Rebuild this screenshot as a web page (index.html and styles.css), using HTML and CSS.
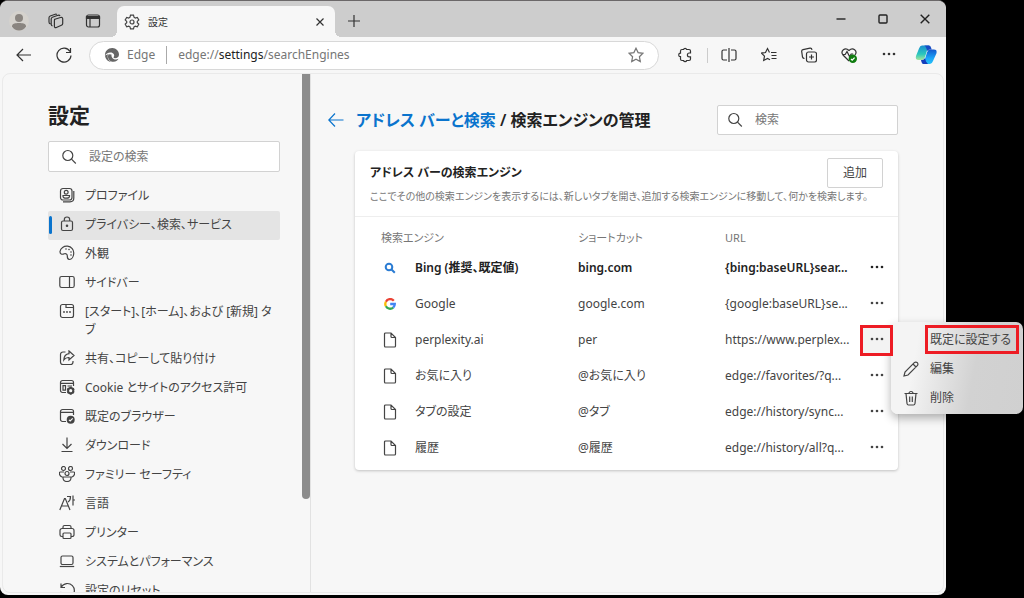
FILE: index.html
```html
<!DOCTYPE html>
<html lang="ja">
<head>
<meta charset="utf-8">
<title>設定</title>
<link rel="stylesheet" href="styles.css">
</head>
<body>
<svg class="sprite" aria-hidden="true">
  <symbol id="dots" viewBox="0 0 16 16"><g fill="currentColor" stroke="none"><circle cx="3" cy="7" r="1.300"/><circle cx="8" cy="7" r="1.300"/><circle cx="13" cy="7" r="1.300"/></g></symbol>
  <symbol id="page" viewBox="0 0 16 16"><path d="M3.500 1H9l4.500 4.500V14a1 1 0 0 1-1 1h-9a1 1 0 0 1-1-1V2a1 1 0 0 1 1-1zM9 1v3.500a1 1 0 0 0 1 1h3.500"/></symbol>
  <symbol id="search" viewBox="0 0 16 16"><circle cx="6.800" cy="6.500" r="5"/><path d="M10.500 10.200l4.300 4.300"/></symbol>
  <symbol id="gear" viewBox="0 0 16 16"><path d="M6.500 1.200h3l.5 2 1.300.8 2-.6 1.500 2.500-1.500 1.500v1.300l1.500 1.500-1.500 2.500-2-.6-1.300.8-.5 2h-3l-.5-2-1.300-.8-2 .6-1.500-2.500 1.500-1.500V7.400L1.200 5.900l1.500-2.500 2 .6L6 3.200z"/><circle cx="8" cy="8" r="2"/></symbol>
</svg>

<div class="window">
  <header class="tabbar">
    <button class="tool tab-tool" aria-label="プロファイル"><svg class="avatar" viewBox="0 0 20 20"><circle cx="10" cy="10" r="10" fill="#d5d2cd"/><circle cx="10" cy="7" r="4" fill="#8a8580"/><path d="M3 15.500c0-3 3-3.500 7-3.500s7 .5 7 3.500c-1.500 2.500-4 4-7 4s-5.500-1.500-7-4z" fill="#8a8580"/></svg></button>
    <button class="tool tab-tool" aria-label="ワークスペース"><svg class="icon" viewBox="0 0 16 16"><path d="M6 6.500L12.500 4.500q2-.5 2.200 1.300v4.700q0 1.300-1.300 1.800l-5 2.200q-2 .7-2-1.300V7.500q0-1 1-1.300"/><path d="M4.500 13q-1.300-.4-1.300-2V6q0-1.200 1.200-1.700l5.600-2q1.500-.4 2 .8M2.500 11Q1 10.700 1 9V4.700Q1 3.500 2.200 3l5-1.800q1-.3 1.700.2"/></svg></button>
    <button class="tool tab-tool" aria-label="タブ操作メニュー"><svg class="icon" viewBox="0 0 16 16"><rect x="1.500" y="2" width="13" height="12" rx="2"/><path d="M1.500 3.500h13v2h-13z" fill="currentColor"/><path d="M5 5v9"/></svg></button>
    <div class="tab">
      <svg class="icon" viewBox="0 0 16 16"><use href="#gear"/></svg>
      <span class="tab-title">設定</span>
      <button class="tool tab-close" aria-label="タブを閉じる"><svg class="icon-xs" viewBox="0 0 8 8"><path d="M.5.5l7 7M7.500.5l-7 7"/></svg></button>
    </div>
    <button class="tool tab-tool" aria-label="新しいタブ"><svg class="icon-s" viewBox="0 0 12 12"><path d="M6 0v12M0 6h12"/></svg></button>
    <div class="controls">
      <button class="tool control" aria-label="最小化"><svg class="icon-c" viewBox="0 0 10 10"><path d="M.5 5h9"/></svg></button>
      <button class="tool control" aria-label="最大化"><svg class="icon-c" viewBox="0 0 10 10"><rect x="1" y="1" width="8" height="8" rx="1"/></svg></button>
      <button class="tool control" aria-label="閉じる"><svg class="icon-c" viewBox="0 0 10 10"><path d="M.7.7l8.600 8.600M9.300.7L.7 9.300"/></svg></button>
    </div>
  </header>

  <div class="toolbar">
    <button class="tool" aria-label="戻る"><svg class="icon" viewBox="0 0 16 16"><path d="M15 8H1.500M7 2L1 8l6 6"/></svg></button>
    <button class="tool" aria-label="更新"><svg class="icon" viewBox="0 0 16 16"><path d="M14 4.500A7 7 0 1 0 15 8.500M14.500 1v4.500H10"/></svg></button>
    <div class="address">
      <svg class="icon edge" viewBox="0 0 16 16"><path d="M1 9C.5 4 4.500.8 8.500 1 12 1.200 15 4 15 7.500c0 2.500-1.700 3.800-4 3.800-1.500 0-1.700-.8-1.200-1.500C11 8 9.500 5.500 6.500 5.500 4 5.500 1.500 6.700 1 9z"/><path d="M4.500 7.200C2.800 11 5.500 14.800 9.500 14.800c2.500 0 4.500-1.500 5-3-3 1.700-7.500.2-7-4.300z"/><path d="M1 8.500C1.300 12 4 14.500 7 15c-2.500-1.700-4-4.500-3-7.800z"/></svg>
      <span class="brand">Edge</span>
      <span class="url">edge://<b>settings</b>/searchEngines</span>
      <button class="tool star" aria-label="お気に入りに追加"><svg class="icon" viewBox="0 0 16 16"><path d="M8 1.200l2.100 4.400 4.800.7-3.500 3.400.9 4.900L8 12.300l-4.300 2.300.9-4.900L1.100 6.300l4.800-.7z"/></svg></button>
    </div>
    <button class="tool" aria-label="拡張機能"><svg class="icon" viewBox="0 0 16 16"><path d="M5 2.500h1.500a1.700 1.700 0 0 1 3.200 0H12a1.500 1.500 0 0 1 1.500 1.500v2h-1.200a1.900 1.900 0 0 0 0 3.800h1.200v2.200a1.500 1.500 0 0 1-1.500 1.500H9.700a1.700 1.700 0 0 1-3.200 0H5A1.500 1.500 0 0 1 3.500 12V9.700a1.800 1.800 0 0 1 0-3.600V4A1.500 1.500 0 0 1 5 2.500z"/></svg></button>
    <span class="divider"></span>
    <button class="tool" aria-label="分割画面"><svg class="icon" viewBox="0 0 16 16"><path d="M8 1v14M6 3H2.500A1.500 1.500 0 0 0 1 4.500v7A1.500 1.500 0 0 0 2.500 13H6M10 3h3.500A1.500 1.500 0 0 1 15 4.500v7a1.500 1.500 0 0 1-1.500 1.500H10"/></svg></button>
    <button class="tool" aria-label="お気に入り"><svg class="icon" viewBox="0 0 16 16"><path d="M10 5.500h5.500M10.500 8.500h5M10.500 11.500h5M8.500 5.500L6.500 1.500l-2 4-4 .6 3 3-.8 4.400 3.800-2 2.500 1.300"/></svg></button>
    <button class="tool" aria-label="コレクション"><svg class="icon" viewBox="0 0 16 16"><rect x="5.500" y="5" width="10" height="10" rx="2"/><path d="M10.500 7.500v5M8 10h5M3.500 11.500q-1.500 0-2-1.500L.7 4.500Q.5 3 2 2.600L9 1.200q1.700-.2 2 1.600"/></svg></button>
    <button class="tool" aria-label="ブラウザー エッセンシャル"><svg class="icon" viewBox="0 0 16 16"><path d="M8 14L2 8C-1 4 4-.5 8 3.500 12-.5 17 4 14 8M1.500 7.500h2.700L6 4.500l2.500 5 1.700-2.500h2"/><circle cx="11.800" cy="11.800" r="4.200" fill="#107c10" stroke="none"/><path d="M10 12l1.200 1.200 2.400-2.600" stroke="#fff"/></svg></button>
    <button class="tool" aria-label="設定など"><svg class="icon" viewBox="0 0 16 16"><use href="#dots"/></svg></button>
    <button class="tool copilot" aria-label="Copilot"><svg class="icon-l" viewBox="0 0 22 22"><defs><linearGradient id="cg1" x1="0" y1="0" x2="0" y2="1"><stop offset="0" stop-color="#198ed0"/><stop offset=".6" stop-color="#2bc8bd"/><stop offset="1" stop-color="#a8e59c"/></linearGradient><linearGradient id="cg2" x1="0" y1="0" x2="0" y2="1"><stop offset="0" stop-color="#1258ce"/><stop offset=".6" stop-color="#1ba4f8"/><stop offset="1" stop-color="#27c2f6"/></linearGradient></defs><path d="M14 1.500H7Q5 1.500 4 4.500L1 12q-1 4 2.500 4H7q2 0 3-3l2.500-8Q13 3.500 14.500 3z" fill="url(#cg1)"/><path d="M8 20h7q2 0 3-3l3.400-7.500q1-4-2.500-4H15q-2 0-3 3l-2.500 8q-.7 2.500-2 2.500z" fill="url(#cg2)"/><path d="M9 1.500h5q1.500 0 2 2l.7 2H15q-2 0-2.700 1.500L11 3.500Q10.300 1.500 9 1.500z" fill="#174bc4"/><path d="M13 20H8.500q-1.500 0-2-2L6 16h1q2 0 3-2l1 3.500z" fill="#153dbb"/></svg></button>
  </div>

  <div class="content">
    <aside class="sidebar">
      <div class="sidebar-body">
        <h1>設定</h1>
        <label class="search"><svg class="icon" viewBox="0 0 16 16"><use href="#search"/></svg><input type="text" placeholder="設定の検索" aria-label="設定の検索"></label>
        <nav class="menu">
          <a href="#"><svg class="icon" viewBox="0 0 16 16"><rect x="1.500" y="1.500" width="11.500" height="11.500" rx="2.500"/><circle cx="7.200" cy="5.200" r="1.900"/><path d="M4 8.500h6.500v.7c0 2.600-6.500 2.600-6.500 0zM14.800 4v7q0 3.800-3.800 3.800H4"/></svg>プロファイル</a>
          <a href="#" class="selected" aria-current="page"><svg class="icon" viewBox="0 0 16 16"><rect x="2.500" y="5" width="11" height="9.500" rx="1.500"/><path d="M5.300 5V3.700a2.700 2.700 0 0 1 5.400 0V5"/><circle cx="8" cy="9.800" r=".7" fill="currentColor"/></svg>プライバシー、検索、サービス</a>
          <a href="#"><svg class="icon" viewBox="0 0 16 16"><path d="M1 6.500C1.500 3 5 .8 8.500 1.200c4 .4 6.500 3.600 6.200 7.300-.2 3.300-2 6-4.200 6s-2.200-2-2.200-3.500c0-2-1.500-2.800-3-2.200-2.300 1-4.500.4-4.300-2.300z"/><g fill="currentColor" stroke="none"><circle cx="7" cy="4" r=".8"/><circle cx="10" cy="4.500" r=".8"/><circle cx="12" cy="7" r=".8"/><circle cx="12" cy="10" r=".8"/></g></svg>外観</a>
          <a href="#"><svg class="icon" viewBox="0 0 16 16"><rect x=".8" y="2.500" width="14.400" height="11" rx="1.800"/><path d="M10.500 2.500v11"/></svg>サイドバー</a>
          <a href="#"><svg class="icon" viewBox="0 0 16 16"><rect x="1.500" y="1.500" width="13" height="13" rx="2"/><path d="M7 1.500v3h7.500"/><g fill="currentColor" stroke="none"><circle cx="5" cy="9" r=".9"/><circle cx="8" cy="9" r=".9"/><circle cx="11" cy="9" r=".9"/></g></svg><span>[スタート]、[ホーム]、および [新規] タ<br>ブ</span></a>
          <a href="#"><svg class="icon" viewBox="0 0 16 16"><path d="M6.500 2H4a2.500 2.500 0 0 0-2.500 2.500V12A2.500 2.500 0 0 0 4 14.500h7.500A2.500 2.500 0 0 0 14 12v-1M10 1l5 4.500-5 4.500V7.500C7.500 7.300 6 8.300 4.800 10 5 6 7 4 10 3.700z"/></svg>共有、コピーして貼り付け</a>
          <a href="#"><svg class="icon" viewBox="0 0 16 16"><path d="M7 13.500H3.500a2 2 0 0 1-2-2v-8a2 2 0 0 1 2-2h9a2 2 0 0 1 2 2V7M1.500 4.300h13M4 6.700h2.500v4.500H4zM8.500 7H13"/><circle cx="11.700" cy="11.700" r="2.600" stroke-width="2"/><path d="M11.700 7.800v1M11.700 14.700v1M8.300 9.700l1 .6M14.100 13.100l1 .6M8.300 13.700l1-.6M14.100 10.300l1-.6" stroke-width="2"/></svg>Cookie とサイトのアクセス許可</a>
          <a href="#"><svg class="icon" viewBox="0 0 16 16"><path d="M7 13.500H3.500a2 2 0 0 1-2-2v-8a2 2 0 0 1 2-2h9a2 2 0 0 1 2 2V7M1.500 4.300h13"/><circle cx="11.700" cy="11.700" r="4" fill="currentColor" stroke="none"/><path d="M10 11.800l1.200 1.200 2.500-2.600" stroke="#f7f7f7"/></svg>既定のブラウザー</a>
          <a href="#"><svg class="icon" viewBox="0 0 16 16"><path d="M8 .5v11M3.500 7L8 11.500 12.500 7M2.500 14.500h11"/></svg>ダウンロード</a>
          <a href="#"><svg class="icon" viewBox="0 0 16 16"><circle cx="4.500" cy="2.500" r="2"/><circle cx="11.500" cy="2.500" r="2"/><circle cx="8" cy="7.500" r="2"/><path d="M4 11H3Q.5 10.500.3 7q0-1 1-1H5M12 11h1q2.500-.5 2.700-4 0-1-1-1H11M4 11h8q.3 4.500-4 4.500T4 11z"/></svg>ファミリー セーフティ</a>
          <a href="#"><svg class="icon" viewBox="0 0 16 16"><path d="M.8 15L5.500 3.500h.8L11 15M2.500 11h7M8 1.500h3.500q0 4-2.500 5.500M14 .5v10M14 5h2"/></svg>言語</a>
          <a href="#"><svg class="icon" viewBox="0 0 16 16"><path d="M4 12.500H2.800A1.800 1.800 0 0 1 1 10.700V6.500a2 2 0 0 1 2-2h10a2 2 0 0 1 2 2v4.200a1.800 1.800 0 0 1-1.800 1.800H12M4 4.500V3q0-1.500 1.500-1.500h5Q12 1.500 12 3v1.500"/><rect x="4" y="9" width="8" height="5.500" rx="1"/></svg>プリンター</a>
          <a href="#"><svg class="icon" viewBox="0 0 16 16"><rect x="2" y="3" width="12" height="8.500" rx="1.500"/><path d="M.8 13.500h14.400"/></svg>システムとパフォーマンス</a>
          <a href="#"><svg class="icon" viewBox="0 0 16 16"><path d="M2 1.500v4h4M2.300 5A7 7 0 1 1 1.500 10"/></svg>設定のリセット</a>
        </nav>
      </div>
      <div class="scrollbar"></div>
    </aside>

    <main class="main">
      <div class="page-head">
        <a href="#" class="back" aria-label="戻る"><svg class="icon" viewBox="0 0 16 16"><path d="M15.500 8H1M7 1.500L.8 8 7 14.500"/></svg></a>
        <h2><a href="#">アドレス バーと検索</a> / 検索エンジンの管理</h2>
        <label class="search page-search"><svg class="icon" viewBox="0 0 16 16"><use href="#search"/></svg><input type="text" placeholder="検索" aria-label="検索"></label>
      </div>
      <section class="card">
        <div class="card-head">
          <div class="card-text">
            <h3>アドレス バーの検索エンジン</h3>
            <p>ここでその他の検索エンジンを表示するには、新しいタブを開き、追加する検索エンジンに移動して、何かを検索します。</p>
          </div>
          <button class="add">追加</button>
        </div>
        <table class="engines">
          <colgroup><col class="c-icon"><col class="c-name"><col class="c-key"><col><col class="c-more"></colgroup>
          <thead><tr><th colspan="2" class="first">検索エンジン</th><th>ショートカット</th><th>URL</th><th></th></tr></thead>
          <tbody>
            <tr class="default"><td class="fav"><svg class="icon-s bing" viewBox="0 0 12 12"><circle cx="5" cy="5" r="3.300"/><path d="M7.500 7.500l3.300 3.300"/></svg></td><td>Bing (推奨、既定値)</td><td>bing.com</td><td>{bing:baseURL}sear...</td><td class="act"><button class="more" aria-label="その他の操作"><svg class="icon" viewBox="0 0 16 16"><use href="#dots"/></svg></button></td></tr>
            <tr><td class="fav"><svg class="icon-s google" viewBox="0 0 12 12"><path d="M9.800 2.700A4.800 4.800 0 0 0 1.900 3.700" stroke="#ea4335"/><path d="M1.900 3.700a4.800 4.800 0 0 0 0 4.600" stroke="#fbbc05"/><path d="M1.900 8.300a4.800 4.800 0 0 0 7.300 1.300" stroke="#34a853"/><path d="M9.200 9.600Q10.800 8 10.800 6H6.200" stroke="#4285f4"/></svg></td><td>Google</td><td>google.com</td><td>{google:baseURL}se...</td><td class="act"><button class="more" aria-label="その他の操作"><svg class="icon" viewBox="0 0 16 16"><use href="#dots"/></svg></button></td></tr>
            <tr><td class="fav"><svg class="icon" viewBox="0 0 16 16"><use href="#page"/></svg></td><td>perplexity.ai</td><td>per</td><td>https://www.perplex...</td><td class="act"><button class="more marked" aria-label="その他の操作" aria-expanded="true"><svg class="icon" viewBox="0 0 16 16"><use href="#dots"/></svg></button>
              <div class="popup" role="menu">
                <button role="menuitem" class="popup-item highlighted">既定に設定する</button>
                <button role="menuitem" class="popup-item"><svg class="icon" viewBox="0 0 16 16"><path d="M1 15l1-4L11.300 1.700a1.900 1.900 0 0 1 3 3L5 14zM10 3l3 3"/></svg>編集</button>
                <button role="menuitem" class="popup-item"><svg class="icon" viewBox="0 0 16 16"><path d="M1.500 3.500h13M6 3.500a2 2 0 0 1 4 0M3 3.500l1 10q.2 1.500 1.500 1.500h5q1.300 0 1.500-1.500l1-10M6.700 6.500v5.500M9.300 6.500v5.500"/></svg>削除</button>
              </div></td></tr>
            <tr><td class="fav"><svg class="icon" viewBox="0 0 16 16"><use href="#page"/></svg></td><td>お気に入り</td><td>@お気に入り</td><td>edge://favorites/?q...</td><td class="act"><button class="more" aria-label="その他の操作"><svg class="icon" viewBox="0 0 16 16"><use href="#dots"/></svg></button></td></tr>
            <tr><td class="fav"><svg class="icon" viewBox="0 0 16 16"><use href="#page"/></svg></td><td>タブの設定</td><td>@タブ</td><td>edge://history/sync...</td><td class="act"><button class="more" aria-label="その他の操作"><svg class="icon" viewBox="0 0 16 16"><use href="#dots"/></svg></button></td></tr>
            <tr><td class="fav"><svg class="icon" viewBox="0 0 16 16"><use href="#page"/></svg></td><td>履歴</td><td>@履歴</td><td>edge://history/all?q...</td><td class="act"><button class="more" aria-label="その他の操作"><svg class="icon" viewBox="0 0 16 16"><use href="#dots"/></svg></button></td></tr>
          </tbody>
        </table>
      </section>
    </main>
  </div>
</div>
</body>
</html>
```

FILE: styles.css
```css
* { box-sizing: border-box; }

body {
  margin: 0;
  background: #000;
  color: #444;
  font: 12px/18px "Noto Sans", "Noto Sans CJK JP", sans-serif;
  font-feature-settings: "palt";
  overflow: hidden;
}

button, input { font: inherit; font-feature-settings: inherit; color: inherit; }
a { color: inherit; text-decoration: none; }
h1, h2, h3, p { margin: 0; }

svg { flex: none; display: block; fill: none; stroke: currentColor; stroke-width: 1.2; }
.sprite { position: absolute; width: 0; height: 0; }
.icon { width: 16px; height: 16px; }
.icon-s { width: 12px; height: 12px; }
.icon-c { width: 10px; height: 10px; stroke-width: 1.4; }
.icon-xs { width: 8px; height: 8px; }
.icon-l { width: 22px; height: 22px; stroke: none; }
.avatar { width: 20px; height: 20px; stroke: none; }

.window {
  display: flex;
  flex-direction: column;
  height: calc(100vh - 3px);
  margin-right: 78px;
  background: #f7f7f7;
  border-top: 1px solid #6b6869;
  border-radius: 8px;
}

.tool {
  display: flex;
  align-items: center;
  justify-content: center;
  width: 40px;
  height: 30px;
  padding: 0;
  border: 0;
  background: none;
  color: #333;
}

.tabbar {
  display: flex;
  align-items: center;
  height: 36px;
  background: #cdcdcd;
  border-radius: 8px 8px 0 0;
}
.tab-tool { width: 37px; padding-top: 4px; }
.tab {
  display: flex;
  align-items: center;
  align-self: flex-end;
  gap: 8px;
  width: 218px;
  height: 31px;
  margin-left: 6px;
  padding: 0 5px 0 7px;
  background: #f7f7f7;
  border-radius: 7px 7px 0 0;
  position: relative;
}
.tab::before, .tab::after {
  content: "";
  position: absolute;
  bottom: 0;
  width: 6px;
  height: 6px;
}
.tab::before { left: -6px; background: radial-gradient(circle at 0 0, transparent 6px, #f7f7f7 6px); }
.tab::after { right: -6px; background: radial-gradient(circle at 100% 0, transparent 6px, #f7f7f7 6px); }
.tab-title { flex: 1; font-size: 10px; color: #333; }
.tab-close { width: 20px; }
.controls { display: flex; margin-left: auto; }
.control { width: 42px; height: 34px; color: #222; }

.toolbar {
  display: flex;
  align-items: center;
  height: 36px;
  padding: 0 3px 0 4px;
}
.address {
  display: flex;
  flex: 1;
  align-items: center;
  height: 29px;
  margin: 0 6px 0 5px;
  padding: 0 2px 0 14px;
  background: #fff;
  border: 1px solid #d8d8d8;
  border-radius: 15px;
  color: #767676;
}
.edge { fill: #666; stroke: none; }
.brand { margin-left: 7px; padding-right: 11px; border-right: 1px solid #aaa; }
.url { flex: 1; margin-left: 11px; }
.url b { color: #222; font-weight: 400; }
.star { color: #767676; }
.divider { width: 1px; height: 15px; margin: 0 1px 0 2px; background: #ccc; }
.copilot { width: 34px; }

.content {
  display: flex;
  flex: 1;
  min-height: 0;
  margin: 0 2px 2px;
  border: 1px solid #eaeaea;
  border-radius: 8px;
}

.sidebar {
  display: flex;
  flex: 0 0 308px;
  border-right: 1px solid #e2e2e2;
  overflow: hidden;
}
.sidebar-body { flex: 1; min-width: 0; padding: 27px 22px 0 45px; }
.scrollbar { flex: none; width: 8px; height: 82%; background: #8c8c8c; border-radius: 0 0 4px 4px; }
h1 { margin-bottom: 12px; font-size: 21px; line-height: 28px; color: #222; }

.search {
  display: flex;
  align-items: center;
  gap: 12px;
  height: 31px;
  padding: 0 12px;
  background: #fff;
  border: 1px solid #d2d2d2;
  border-radius: 2px;
}
.search input {
  flex: 1;
  min-width: 0;
  padding: 0;
  border: 0;
  outline: 0;
  background: none;
}
.search input::placeholder { color: #767676; }

.menu { margin-top: 10px; }
.menu a {
  display: flex;
  gap: 10px;
  padding: 5px 0 6px 11px;
  border-radius: 2px;
  white-space: nowrap;
  position: relative;
}
.menu .selected { background: #e4e4e4; }
.selected::before {
  content: "";
  position: absolute;
  left: 1px;
  top: 5px;
  width: 3px;
  height: 18px;
  background: #0a74cd;
  border-radius: 2px;
}

.main { flex: 1; min-width: 0; padding: 31px 45px 0 17px; }
.page-head { display: flex; align-items: center; }
.back { color: #0a74cd; }
h2 { flex: 1; margin-left: 12px; font-size: 16px; line-height: 24px; color: #222; white-space: nowrap; font-weight: 600; }
h2 a { color: #0a74cd; }
.page-search { width: 181px; height: 30px; padding: 0 9px; }

.card {
  margin: 16px 0 0 27px;
  padding-bottom: 4px;
  background: #fff;
  border-radius: 4px;
  box-shadow: 0 1px 3px rgba(0, 0, 0, 0.22);
}
.card-head {
  display: flex;
  height: 66px;
  padding: 7px 15px 0;
  border-bottom: 1px solid #eee;
}
.card-text { flex: 1; min-width: 0; padding-top: 5px; white-space: nowrap; }
h3 { font-size: 12px; line-height: 20px; font-weight: 600; color: #222; }
.card-text p { margin-top: 5px; font-size: 10px; line-height: 16px; color: #767676; }
.add {
  width: 56px;
  height: 30px;
  padding: 0;
  background: #fff;
  border: 1px solid #d2d2d2;
  border-radius: 2px;
}

.engines { width: 100%; table-layout: fixed; border-collapse: collapse; margin-top: 9px; }
.engines th { height: 24px; padding: 0; font-weight: 400; text-align: left; color: #767676; font-size: 11px; }
.engines .first { padding-left: 26px; }
.engines td { height: 36px; padding: 0; white-space: nowrap; }
.default { font-weight: 600; color: #222; }
.c-icon { width: 60px; }
.c-name { width: 163px; }
.c-key { width: 147px; }
.c-more { width: 38px; }
.fav svg { margin: 0 auto; }
.engines .fav { padding-right: 8px; padding-left: 17px; }
.bing { stroke: #2b7cd3; stroke-width: 2; }
.google { stroke-width: 2.300; }
.act { position: relative; }
.more {
  display: flex;
  align-items: center;
  justify-content: center;
  width: 33px;
  height: 31px;
  padding: 0;
  border: 3px solid transparent;
  background: none;
}
.marked { position: relative; z-index: 2; background: #f3f3f3; border-color: #ed1c24; }

.popup {
  position: absolute;
  left: 31px;
  top: 0;
  width: 132px;
  padding: 3px 4px 2px 3px;
  background: linear-gradient(100deg, #f4f4f4 20%, #d2d2d2 62%, #d0d0d0);
  border-radius: 7px;
  box-shadow: 0 4px 10px rgba(0, 0, 0, 0.3);
}
.popup-item {
  display: flex;
  align-items: center;
  gap: 11px;
  width: 100%;
  height: 29px;
  padding: 0 9px;
  border: 0;
  background: none;
  white-space: nowrap;
}
.highlighted { width: 94px; margin-left: auto; padding: 0 2px; border: 3px solid #ed1c24; }
```
